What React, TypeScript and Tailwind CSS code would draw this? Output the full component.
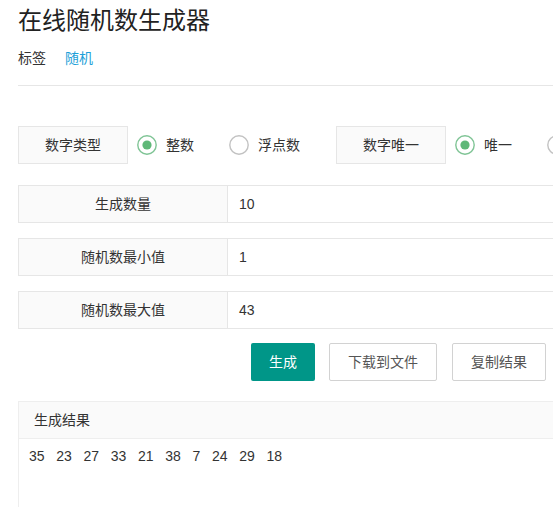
import React from "react";

const FONT = {
  fontFamily: '"Liberation Sans", "Noto Sans CJK SC", Arial, sans-serif',
};

function Radio({ checked, label, className = "" }: { checked: boolean; label: string; className?: string }) {
  return (
    <div className={`flex items-center h-[38px] ${className}`}>
      <svg width="22" height="22" viewBox="0 0 22 22" className="shrink-0">
        <circle
          cx="11"
          cy="11"
          r="9.2"
          fill="none"
          stroke={checked ? "#7fc495" : "#c2c2c2"}
          strokeWidth="1.4"
        />
        {checked && <circle cx="11" cy="11" r="4.6" fill="#5FB878" />}
      </svg>
      <span className="ml-[8px] text-[14px] leading-[20px] text-[#333]">{label}</span>
    </div>
  );
}

function FieldRow({ label, value, className = "" }: { label: string; value: string; className?: string }) {
  return (
    <div className={`flex h-[38px] ${className}`}>
      <div className="w-[210px] shrink-0 flex items-center justify-center border border-[#e6e6e6] bg-[#fafafa] text-[14px] leading-[20px] text-[#333]">
        {label}
      </div>
      <div className="flex-1 flex items-center pl-[11px] border border-l-0 border-[#e6e6e6] bg-white text-[14px] leading-[20px] text-[#333]">
        {value}
      </div>
    </div>
  );
}

export default function App() {
  const results = [35, 23, 27, 33, 21, 38, 7, 24, 29, 18];
  return (
    <div className="w-[553px] h-[507px] overflow-hidden bg-white" style={FONT}>
      <div className="w-[760px] pl-[18px]">
        <h1 className="mt-[5px] text-[24px] leading-[32px] text-[#222] font-normal">在线随机数生成器</h1>
        <div className="mt-[11px] flex text-[14px] leading-[20px]">
          <span className="text-[#333]">标签</span>
          <span className="ml-[19px] text-[#1e9fd8]">随机</span>
        </div>
        <div className="mt-[17px] h-px bg-[#e6e6e6]" />

        {/* number type / uniqueness */}
        <div className="mt-[40px] flex items-center">
          <div className="w-[110px] h-[38px] flex items-center justify-center border border-[#e6e6e6] bg-[#fafafa] text-[14px] leading-[20px] text-[#333]">
            数字类型
          </div>
          <Radio checked label="整数" className="ml-[8px]" />
          <Radio checked={false} label="浮点数" className="ml-[34px]" />
          <div className="ml-[36px] w-[110px] h-[38px] flex items-center justify-center border border-[#e6e6e6] bg-[#fafafa] text-[14px] leading-[20px] text-[#333]">
            数字唯一
          </div>
          <Radio checked label="唯一" className="ml-[8px]" />
          <Radio checked={false} label="不唯一" className="ml-[34px]" />
        </div>

        <FieldRow className="mt-[21px]" label="生成数量" value="10" />
        <FieldRow className="mt-[15px]" label="随机数最小值" value="1" />
        <FieldRow className="mt-[15px]" label="随机数最大值" value="43" />

        <div className="mt-[14px] pl-[233px] flex">
          <button className="h-[38px] px-[18px] rounded-[2px] bg-[#009688] text-white text-[14px] leading-[20px]">
            生成
          </button>
          <button className="ml-[14px] h-[38px] px-[18px] rounded-[2px] border border-[#d2d2d2] bg-white text-[#555] text-[14px] leading-[20px]">
            下载到文件
          </button>
          <button className="ml-[15px] h-[38px] px-[18px] rounded-[2px] border border-[#d2d2d2] bg-white text-[#555] text-[14px] leading-[20px]">
            复制结果
          </button>
        </div>

        {/* result card */}
        <div className="mt-[20px] border border-[#eeeeee] bg-white h-[200px]">
          <div className="h-[37px] flex items-center pl-[15px] bg-[#fafafa] border-b border-[#eeeeee] text-[14px] leading-[20px] text-[#333]">
            生成结果
          </div>
          <div className="pt-[7px] pl-[10px] text-[14px] leading-[20px] text-[#333] whitespace-pre">
            {results.join("   ")}
          </div>
        </div>
      </div>
    </div>
  );
}
